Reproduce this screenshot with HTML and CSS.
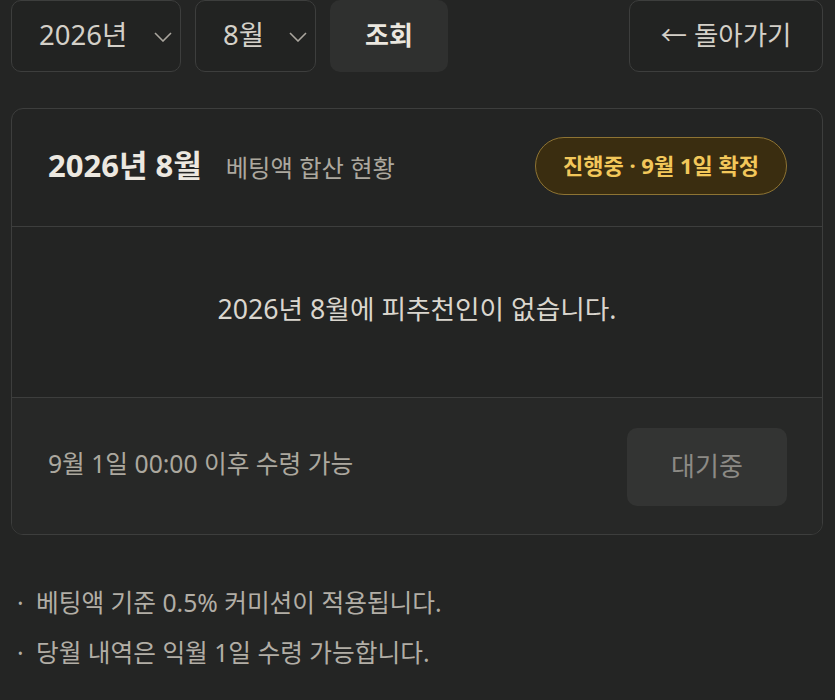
FILE: index.html
```html
<!DOCTYPE html>
<html lang="ko">
<head>
<meta charset="utf-8">
<link rel="stylesheet" href="styles.css">
</head>
<body>
<div class="page">
  <div class="toolbar">
    <div class="controls">
      <div class="select select-year"><span>2026년</span><svg class="chev" viewBox="0 0 18 10" width="18" height="10"><path d="M1 1 L9 9 L17 1" fill="none" stroke="currentColor" stroke-width="1.6"/></svg></div>
      <div class="select select-month"><span>8월</span><svg class="chev" viewBox="0 0 18 10" width="18" height="10"><path d="M1 1 L9 9 L17 1" fill="none" stroke="currentColor" stroke-width="1.6"/></svg></div>
      <button class="btn-query">조회</button>
    </div>
    <button class="btn-back">← 돌아가기</button>
  </div>

  <div class="card">
    <div class="card-head">
      <div class="titles">
        <span class="title">2026년 8월</span>
        <span class="subtitle">베팅액 합산 현황</span>
      </div>
      <span class="badge">진행중 · 9월 1일 확정</span>
    </div>
    <div class="card-body">2026년 8월에 피추천인이 없습니다.</div>
    <div class="card-foot">
      <span class="foot-text">9월 1일 00:00 이후 수령 가능</span>
      <button class="btn-wait">대기중</button>
    </div>
  </div>

  <ul class="notes">
    <li>베팅액 기준 0.5% 커미션이 적용됩니다.</li>
    <li>당월 내역은 익월 1일 수령 가능합니다.</li>
  </ul>
</div>
</body>
</html>
```

FILE: styles.css
```css
* { box-sizing: border-box; }
html, body {
  margin: 0;
  padding: 0;
  background: #242524;
}
body {
  font-family: "Noto Sans", "Noto Sans CJK KR", sans-serif;
  color: #d6d2ca;
}
.page {
  padding: 0 12px 0 11px;
}
.toolbar {
  display: flex;
  justify-content: space-between;
  align-items: stretch;
  height: 72px;
}
.controls {
  display: flex;
  gap: 14px;
}
.select {
  display: flex;
  align-items: center;
  justify-content: space-between;
  border: 1.5px solid #3d3e3d;
  border-radius: 10px;
  background: #222322;
  font-size: 27.5px;
  color: #d4d0c8;
  padding: 0 8px 0 27px;
  line-height: 1;
}
.select span { margin-top: -2px; }
.select-year { width: 170px; }
.select-month { width: 121px; }
.chev { color: #aaa69e; margin-top: 1px; }
button {
  font-family: inherit;
  cursor: pointer;
  line-height: 1;
}
.btn-query {
  width: 118px;
  border: none;
  border-radius: 10px;
  background: #2f302f;
  color: #ebe7df;
  font-size: 26px;
  font-weight: 700;
  padding-bottom: 3px;
}
.btn-back {
  width: 194px;
  border: 1.5px solid #3d3e3d;
  border-radius: 10px;
  background: #222322;
  color: #d4d0c8;
  font-size: 26.5px;
  padding-bottom: 3px;
}
.card {
  margin-top: 36px;
  border: 1.5px solid #3d3e3d;
  border-radius: 12px;
  background: #232423;
  overflow: hidden;
}
.card-head {
  height: 118px;
  display: flex;
  align-items: center;
  justify-content: space-between;
  padding: 0 35px 4px 36px;
  border-bottom: 1.5px solid #3d3e3d;
}
.titles {
  display: flex;
  align-items: baseline;
  gap: 24px;
  line-height: 1;
}
.title {
  font-size: 31px;
  font-weight: 700;
  color: #ece8e0;
}
.subtitle {
  font-size: 24.3px;
  color: #aca89f;
}
.badge {
  display: inline-flex;
  align-items: center;
  justify-content: center;
  width: 252px;
  height: 58px;
  border-radius: 29px;
  border: 1.5px solid #8e7433;
  background: #3a2d10;
  color: #f2c75a;
  font-size: 22px;
  font-weight: 700;
  line-height: 1;
  padding-bottom: 2px;
}
.card-body {
  height: 171px;
  display: flex;
  align-items: center;
  justify-content: center;
  font-size: 26.7px;
  line-height: 1;
  color: #dad6ce;
  border-bottom: 1.5px solid #3d3e3d;
  padding-bottom: 6px;
}
.card-foot {
  height: 136px;
  display: flex;
  align-items: center;
  justify-content: space-between;
  padding: 0 35px 0 36px;
  background: #272827;
}
.foot-text {
  font-size: 24.7px;
  color: #aca89f;
  line-height: 1;
  margin-top: -4px;
}
.btn-wait {
  width: 160px;
  height: 78px;
  border: none;
  border-radius: 10px;
  background: #333433;
  color: #8c8a85;
  font-size: 26px;
  margin-top: 2px;
  padding-bottom: 4px;
}
.notes {
  list-style: none;
  margin: 48px 0 0 0;
  padding: 0;
}
.notes li {
  position: relative;
  padding-left: 25px;
  font-size: 24.7px;
  line-height: 50px;
  color: #b2aea6;
  margin-top: -5px;
  margin-bottom: 5px;
}
.notes li::before {
  content: "·";
  position: absolute;
  left: 6px;
  top: 0;
}
```
